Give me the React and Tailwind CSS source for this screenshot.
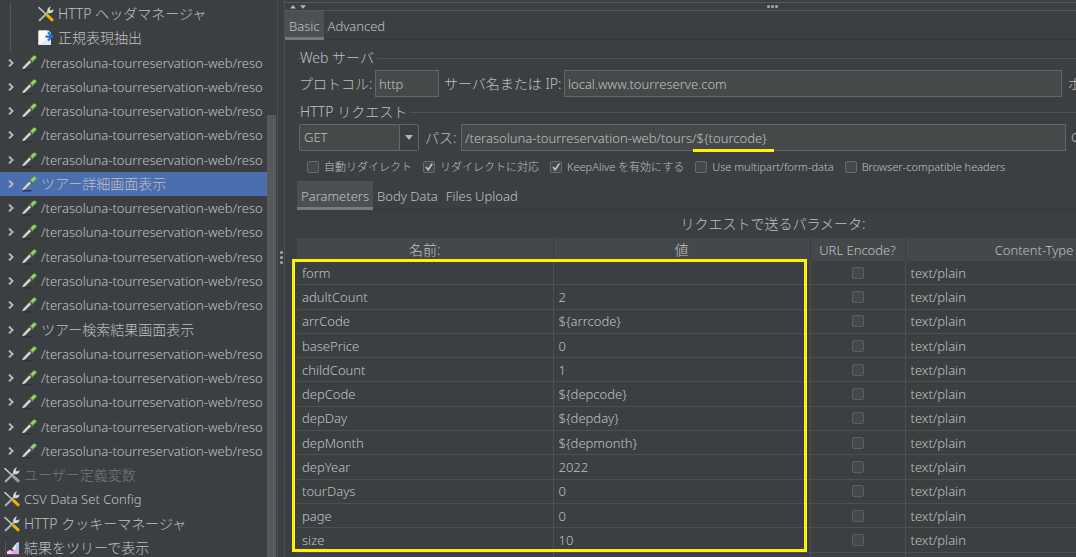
const FONT = "font-['Noto_Sans','Noto_Sans_CJK_JP',sans-serif] font-light";

const RES = "/terasoluna-tourreservation-web/reso";

const TREE = [
  { kind: "tools", level: 2, text: "HTTP ヘッダマネージャ", jp: true },
  { kind: "extract", level: 2, text: "正規表現抽出", jp: true },
  ...Array.from({ length: 5 }, () => ({ kind: "pipette", level: 1, text: RES })),
  { kind: "pipette", level: 1, text: "ツアー詳細画面表示", jp: true, selected: true },
  ...Array.from({ length: 5 }, () => ({ kind: "pipette", level: 1, text: RES })),
  { kind: "pipette", level: 1, text: "ツアー検索結果画面表示", jp: true },
  ...Array.from({ length: 5 }, () => ({ kind: "pipette", level: 1, text: RES })),
  { kind: "toolsOff", level: 0, text: "ユーザー定義変数", jp: true, disabled: true },
  { kind: "tools", level: 0, text: "CSV Data Set Config" },
  { kind: "tools", level: 0, text: "HTTP クッキーマネージャ", jp: true },
  { kind: "chart", level: 0, text: "結果をツリーで表示", jp: true },
];

const PARAMS = [
  ["form", ""],
  ["adultCount", "2"],
  ["arrCode", "${arrcode}"],
  ["basePrice", "0"],
  ["childCount", "1"],
  ["depCode", "${depcode}"],
  ["depDay", "${depday}"],
  ["depMonth", "${depmonth}"],
  ["depYear", "2022"],
  ["tourDays", "0"],
  ["page", "0"],
  ["size", "10"],
];

function Pipette() {
  return (
    <svg viewBox="0 0 16 16" className="size-4 shrink-0" aria-hidden="true">
      <path d="M1 15.500h9l1-1.300H2z" fill="#2b2d2e" />
      <path d="M.8 14.400 2 11.400 8.400 5l2.400 2.200-6.400 6.200z" fill="#85888a" />
      <path d="M1.400 13.600 8.600 5.400l1.400 1.300-7 7z" fill="#e6e6e6" />
      <path d="m7.600 4.600 3.800 3.800.9-1-3.700-3.700z" fill="#3f6b35" />
      <path d="m8.900 4.300 3.500-3.500c1.500-1.300 4.200.7 2.900 2.700l-3.700 3.600z" fill="#6fb14d" />
      <path d="m10.200 4.300 3-3.200 1.200.9-3 3.300z" fill="#a5dd86" />
    </svg>
  );
}

function Tools({ off }) {
  const handle = off ? "#a0a0a0" : "#f5b800";
  const edge = off ? "#8a8a8a" : "#c98a00";
  return (
    <svg viewBox="0 0 16 16" className="size-4 shrink-0" aria-hidden="true">
      <path d="M1.700 14.300 11 5.200" stroke="#a9abac" strokeWidth="2.200" strokeLinecap="round" />
      <path d="M9.600 6.800C8.600 3.800 10 1 13 .5l-1.500 2.700 1.500 1.300 2.500-1.300c.2 3-2.700 4.900-5.900 3.600z" fill="#d6d6d6" />
      <path d="M1 1.600 8.600 8.800" stroke="#c4c4c4" strokeWidth="1.500" strokeLinecap="round" />
      <path d="m9.500 9.600 4.600 4.300" stroke={edge} strokeWidth="3.200" strokeLinecap="round" />
      <path d="m9.500 9.400 4.600 4.300" stroke={handle} strokeWidth="2.200" strokeLinecap="round" />
    </svg>
  );
}

function Extract() {
  return (
    <svg viewBox="0 0 16 16" className="size-4 shrink-0" aria-hidden="true">
      <path d="M.500.500h10L13 3v12H.500z" fill="#e3e9ef" />
      <path d="M.500.500h8.500L9 9l-8.500 6z" fill="#f8f9fa" />
      <path d="m10.500.500 2.500 2.500h-2.500z" fill="#b9c4cf" />
      <path d="M7.500 6.600H14M10 2.600l4.200 4-4.200 4" fill="none" stroke="#1d74d0" strokeWidth="2.100" />
    </svg>
  );
}

function Chart() {
  return (
    <svg viewBox="0 0 16 16" className="size-4 shrink-0" aria-hidden="true">
      <path d="M1.500 2v12.500H15" fill="none" stroke="#55585a" />
      <path d="M8 8.500 12.500 3l2.500-1V9l-4 3z" fill="#d5e8fa" />
      <path d="M3 14v-2.500l3-1.700 3 1.200 1.500-1L15 8v6z" fill="#f0a3e0" />
      <path d="M3 14v-2l3-1.500 2.500 1.500-2 2z" fill="#f7cdf0" />
      <path d="M12 5.500 15 2v7l-3 2.500z" fill="#a5c8ee" />
    </svg>
  );
}

function Chevron() {
  return (
    <svg viewBox="0 0 6 8" className="h-2 w-[6px] shrink-0" aria-hidden="true">
      <path d="m1 .6 3.600 3.400L1 7.400" fill="none" stroke="#b8babb" strokeWidth="1.900" />
    </svg>
  );
}

function NodeIcon({ kind }) {
  if (kind === "pipette") return <Pipette />;
  if (kind === "extract") return <Extract />;
  if (kind === "chart") return <Chart />;
  return <Tools off={kind === "toolsOff"} />;
}

function TreeRow({ node }) {
  const indent = node.level === 1 ? "pl-2" : node.level === 0 ? "pl-1" : "pl-[10px]";
  return (
    <li
      className={`flex min-h-0 items-center whitespace-nowrap ${indent} ${
        node.selected ? "bg-[#4b6eaf]" : ""
      } ${node.disabled ? "text-[#777777]" : ""}`}
    >
      {node.level === 2 && <span className="mr-[27px] w-px self-stretch bg-[#55585a]" />}
      {node.level === 1 && (
        <span className="mr-[7px] flex">
          <Chevron />
        </span>
      )}
      <NodeIcon kind={node.kind} />
      <span className={`ml-1 ${node.jp ? "text-sm" : ""}`}>{node.text}</span>
    </li>
  );
}

function Check({ id, label, checked, muted }) {
  return (
    <span className="flex items-center gap-[5px]">
      <span className="grid size-3 shrink-0">
        <input
          id={id}
          type="checkbox"
          defaultChecked={checked}
          aria-label={label ? undefined : id}
          className={`peer col-start-1 row-start-1 size-3 appearance-none rounded-xs border bg-[#43494a] ${
            muted ? "border-[#5c5f60]" : "border-[#6b6b6b]"
          }`}
        />
        <svg
          viewBox="0 0 12 12"
          className="pointer-events-none invisible col-start-1 row-start-1 size-3 peer-checked:visible"
          aria-hidden="true"
        >
          <path d="m3 6 2.200 2.700L9.300 2.500" fill="none" stroke="#bbbbbb" strokeWidth="1.700" />
        </svg>
      </span>
      {label && <label htmlFor={id}>{label}</label>}
    </span>
  );
}

function Tabs({ items, label }) {
  return (
    <div role="tablist" aria-label={label} className="flex h-[29px] shrink-0 border-b border-[#343739]">
      {items.map((item, i) => (
        <button
          key={item}
          type="button"
          role="tab"
          aria-selected={i === 0}
          className={`-mb-px flex shrink-0 items-center border-b-3 px-1 pt-1 ${
            i === 0 ? "border-[#747a80] bg-[#4c5052]" : "border-transparent"
          }`}
        >
          {item}
        </button>
      ))}
    </div>
  );
}

function GroupTitle({ children }) {
  return (
    <div className="flex h-5 items-center gap-[3px] text-sm">
      <span className="-mr-1 h-px w-1 bg-[#515456]" />
      <h2>{children}</h2>
      <span className="h-px flex-1 bg-[#515456]" />
    </div>
  );
}

const FIELD = "h-[27px] border border-[#646666] bg-[#45494a] px-[3px] outline-none";

export default function App() {
  return (
    <div
      className={`flex h-screen overflow-hidden bg-[#3c3f41] text-[13px] leading-5 text-[#c0c0c0] ${FONT}`}
    >
      <nav aria-label="Test plan" className="flex w-[278px] shrink-0 border-r border-[#4d5052]">
        <ul className="grid h-[560px] min-w-0 flex-1 auto-rows-fr overflow-hidden pt-[2px]">
          {TREE.map((node, i) => (
            <TreeRow key={i} node={node} />
          ))}
        </ul>
        <div className="mr-px flex w-[9px] flex-col pt-[115px]">
          <div className="flex-1 bg-[#58595a]" />
        </div>
      </nav>

      <div className="flex w-[7px] shrink-0 flex-col items-center justify-center gap-[2px] border-r border-[#4d5052] pb-[43px]">
        <span className="size-[3px] rounded-full bg-[#a9abac]" />
        <span className="size-[3px] rounded-full bg-[#a9abac]" />
        <span className="size-[3px] rounded-full bg-[#a9abac]" />
      </div>

      <main className="flex min-w-0 flex-1 flex-col overflow-hidden">
        <div className="mt-[2px] flex h-[9px] shrink-0 items-center gap-1 border-y border-[#55585a] pl-1">
          <svg viewBox="0 0 18 6" className="h-[6px] w-[18px]" aria-hidden="true">
            <path d="m1 4.500 3-3.500 3 3.500zM11 1.200h6l-3 3.500z" fill="#b4b6b7" />
          </svg>
          <span className="flex flex-1 justify-center gap-px pr-1 pl-[162px]">
            <span className="size-[3px] rounded-full bg-[#a9abac]" />
            <span className="size-[3px] rounded-full bg-[#a9abac]" />
            <span className="size-[3px] rounded-full bg-[#a9abac]" />
          </span>
        </div>

        <Tabs items={["Basic", "Advanced"]} label="Sampler" />

        <div className="flex flex-col pt-2 pl-3">
          <GroupTitle>Web サーバ</GroupTitle>
          <div className="mt-[2px] flex items-center text-sm whitespace-nowrap">
            <label htmlFor="protocol" className="w-[78px] shrink-0 pl-[2px]">
              プロトコル:
            </label>
            <input
              id="protocol"
              defaultValue="http"
              className={`w-16 shrink-0 text-[13px] ${FIELD}`}
            />
            <label htmlFor="server" className="w-[125px] shrink-0 pl-[5px]">
              サーバ名または IP:
            </label>
            <input
              id="server"
              defaultValue="local.www.tourreserve.com"
              className={`min-w-0 flex-1 text-[13px] ${FIELD}`}
            />
            <span className="w-[14px] shrink-0 overflow-hidden pl-[6px]">ポ</span>
          </div>

          <div className="mt-[5px]">
            <GroupTitle>HTTP リクエスト</GroupTitle>
          </div>
          <div className="mt-[2px] flex items-center pl-[2px] text-sm whitespace-nowrap">
            <div className="grid w-[120px] shrink-0">
              <select
                aria-label="Method"
                defaultValue="GET"
                className="col-start-1 row-start-1 h-[27px] appearance-none rounded-xs border border-[#646666] bg-[#45494a] px-1 text-[13px]"
              >
                <option>GET</option>
                <option>POST</option>
              </select>
              <span className="pointer-events-none col-start-1 row-start-1 my-px mr-px flex w-[19px] items-center justify-center justify-self-end border-l border-[#646666] bg-[#3c3f41]">
                <svg viewBox="0 0 8 5" className="h-[5px] w-2" aria-hidden="true">
                  <path d="M0 0h8L4 5z" fill="#b4b6b7" />
                </svg>
              </span>
            </div>
            <label htmlFor="path" className="w-[42px] shrink-0 pl-[6px]">
              パス:
            </label>
            <div className="relative min-w-0 flex-1">
              <input
                id="path"
                defaultValue="/terasoluna-tourreservation-web/tours/${tourcode}"
                className={`w-full text-[13px] ${FIELD}`}
              />
              <span className="absolute bottom-[-1px] left-[232px] h-[3px] w-[81px] bg-[#fff200]" />
            </div>
            <span className="w-[10px] shrink-0 overflow-hidden pl-[5px] text-[13px]">C</span>
          </div>

          <div className="mt-[6px] flex h-5 items-center gap-[11px] pl-[10px] text-[11px] whitespace-nowrap">
            <Check id="auto-redirect" label="自動リダイレクト" />
            <Check id="follow-redirect" label="リダイレクトに対応" checked />
            <Check id="keep-alive" label="KeepAlive を有効にする" checked />
            <Check id="multipart" label="Use multipart/form-data" />
            <Check id="compatible" label="Browser-compatible headers" />
          </div>

          <div className="mt-1">
            <Tabs items={["Parameters", "Body Data", "Files Upload"]} label="Request content" />
          </div>

          <div className="w-[952px]">
            <h3 className="flex h-7 items-center justify-center text-sm">リクエストで送るパラメータ:</h3>
            <div className="relative w-[866px]">
              <table className="h-[338px] w-full table-fixed border-collapse">
                <colgroup>
                  <col className="w-[256px]" />
                  <col className="w-[257px]" />
                  <col className="w-[95px]" />
                  <col className="w-[258px]" />
                </colgroup>
                <thead className="bg-[#45484a]">
                  <tr className="h-[23px]">
                    {["名前:", "値", "URL Encode?", "Content-Type"].map((h, i) => (
                      <th
                        key={h}
                        className={`border-r border-[#383b3d] p-0 font-light ${i < 2 ? "text-sm" : ""}`}
                      >
                        {h}
                      </th>
                    ))}
                  </tr>
                </thead>
                <tbody>
                  {PARAMS.map(([name, value]) => (
                    <tr key={name} className="border-b border-[#4d5051]">
                      <td className="border-r border-[#4d5051] px-[5px] py-0">{name}</td>
                      <td className="border-r border-[#4d5051] px-[5px] py-0">{value}</td>
                      <td className="border-r border-[#4d5051] p-0">
                        <span className="flex justify-center">
                          <Check id={`encode-${name}`} muted />
                        </span>
                      </td>
                      <td className="px-[5px] py-0">text/plain</td>
                    </tr>
                  ))}
                  <tr>
                    <td className="border-r border-[#4d5051] p-0">&nbsp;</td>
                    <td className="border-r border-[#4d5051]" />
                    <td className="border-r border-[#4d5051]" />
                    <td />
                  </tr>
                </tbody>
              </table>
              <div className="pointer-events-none absolute top-[21px] left-[-5px] h-[293px] w-[515px] border-3 border-[#fff200]" />
            </div>
          </div>
        </div>
      </main>
    </div>
  );
}
